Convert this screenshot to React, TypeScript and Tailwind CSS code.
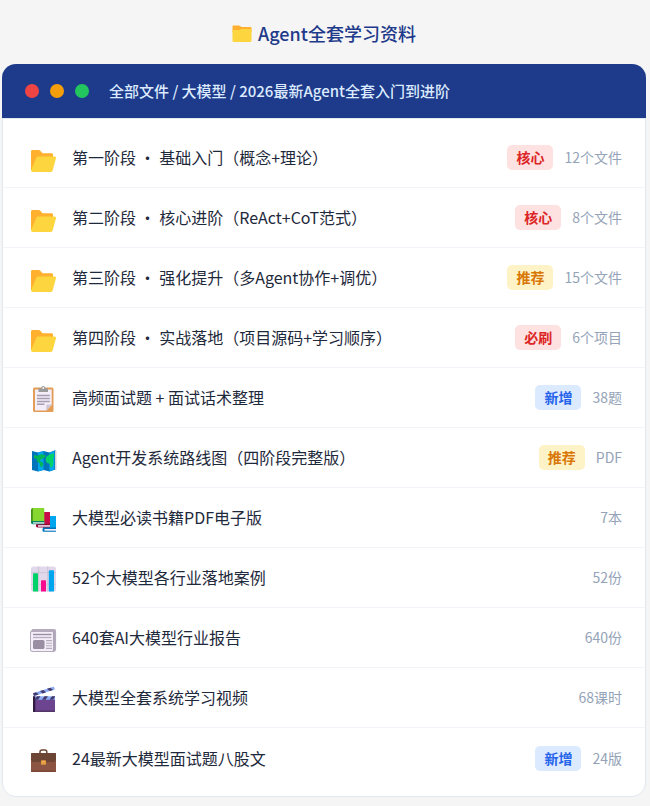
import type { ReactNode } from "react";

type Tone = "red" | "amber" | "blue";

type FileRow = {
  icon: ReactNode;
  name: string;
  tag?: { label: string; tone: Tone };
  count: string;
};

const toneClasses: Record<Tone, string> = {
  red: "bg-[#fee2e2] text-[#dc2626]",
  amber: "bg-[#fef3c7] text-[#d97706]",
  blue: "bg-[#dbeafe] text-[#2563eb]",
};

function Icon({ children }: { children: ReactNode }) {
  return (
    <svg viewBox="0 0 28 28" className="mt-0.5 size-7 shrink-0" aria-hidden="true">
      {children}
    </svg>
  );
}

function ClosedFolder() {
  return (
    <svg viewBox="0 0 20 20" className="size-5 shrink-0" aria-hidden="true">
      <path d="M.5 3.700c0-.7.5-1.200 1.200-1.200h5.300c.4 0 .8.200 1.100.5l1.300 1.100h8.900c.7 0 1.200.5 1.200 1.200V9.500H.5z" fill="#FFB02E" />
      <path d="M.5 8.200C.5 7.500 1 7 1.700 7h5.700c.4 0 .7-.1 1-.4l.6-.4c.3-.2.6-.3 1-.3h8.300c.7 0 1.200.5 1.200 1.200v10.700c0 .7-.5 1.200-1.200 1.200H1.700c-.7 0-1.200-.5-1.200-1.200z" fill="#FCD53F" />
    </svg>
  );
}

function FolderIcon() {
  return (
    <Icon>
      <path d="M2 6.500C2 5.700 2.700 5 3.500 5h6.200c.5 0 1 .2 1.400.6l2.400 2.600h9c.9 0 1.500.7 1.500 1.500V14L6 25.500 2 25z" fill="#FFB02E" />
      <path d="M7.400 12.700c.2-.8.900-1.300 1.700-1.300H25.600c1.100 0 1.700.9 1.400 1.900l-3.300 12c-.2.9-1 1.600-2 1.600H3.800c-1.200 0-2-1-1.700-2.100z" fill="#FCD53F" />
    </Icon>
  );
}

function ClipboardIcon() {
  return (
    <Icon>
      <rect x="4" y="2.500" width="20.500" height="24.500" rx="1.500" fill="#E39D57" />
      <path d="M6 4.500h16.700V20L17.300 25.500H6z" fill="#F3EEF8" />
      <path d="M22.700 19.500 17.300 25.500v-4.600c0-.8.600-1.400 1.400-1.400z" fill="#CDC4D6" />
      <path d="M9.500 4.300c0-.6.500-1 1-1h1.600C12.300 1.900 13.100 1 14.200 1s2 .9 2.200 2.300H18c.6 0 1 .4 1 1v2.700H9.500z" fill="#9B9B9B" />
      <circle cx="14.200" cy="2.900" r=".9" fill="#fff" />
      <path d="M8 10.500h12.800M8 13.500h12.800M8 16.500h12.800M8 19.200h7.500" stroke="#A69DB0" strokeWidth="1.400" />
    </Icon>
  );
}

function MapIcon() {
  return (
    <Icon>
      <path d="m3 6 6 1.500 5.500-1.500 6 1.500L26.500 5v19.500l-6 2-6-1.500L9 26.500 3 25z" fill="#0074BA" />
      <path d="m9 7.500 5.500-1.500v19L9 26.500zM20.500 7.500l5-1.500v18.500l-5 2z" fill="#00A6ED" />
      <path d="m5 10 3.500.8L12.800 9l1.700 1 2.200-.3-.5 2.300-3 2-1.700.4-.5 1.600 2.500 1.300 1 2-1.800 3.300-1.700-1.700-.5-2.800-2.500-1.800-.2-2.200L5 13z" fill="#00B659" />
      <path d="m17 12 3.500-2.500L25 8.300v4.200l-1 1.500.5 3-.7 4.300-2.300 1.500-1-4.200-2.500-.6-1.300-2.700z" fill="#00D26A" />
      <path d="m26 5.200 1.500.8v18.800l-1.500.2z" fill="#D3D3D3" />
    </Icon>
  );
}

function BooksIcon() {
  return (
    <Icon>
      <path d="M14 12.500c0-1 .6-1.500 1.500-1.500H27v14.300H14z" fill="#00A6ED" />
      <path d="M13.500 23.600c.6-.9 1.300-1.200 2.500-1.200h11V25c-.6-.1-.8.500 0 1v.7H15c-1 0-1.700-.8-1.500-1.800z" fill="#0074BA" />
      <path d="M15.500 24H27v1.700H15.500z" fill="#F3EEF8" />
      <path d="M7.500 8.500c0-.9.600-1.500 1.500-1.500h12v14.500H7.500z" fill="#CA0B4A" />
      <path d="M7 20c.5-1 1.200-1.300 2.300-1.300H21v2c-.5.300-.5.700 0 1v.8H8.700C7.500 22.500 6.800 21.500 7 20.500z" fill="#990838" />
      <path d="M9 20.200h12v1.500H9z" fill="#F3EEF8" />
      <path d="M2.200 4.800C2.200 3.700 3 3 4 3h10.500c.5 0 .8.300.8.800V18H2.200z" fill="#86D72F" />
      <path d="M2 5.500C2 4.200 2.700 3.400 3.800 3v14L2 18z" fill="#44911B" />
      <path d="M2 17.600c.3-1 1-1.500 2-1.500h11.300v1.200c-.5.300-.5.700 0 1v1H4c-1.300 0-2-.7-2-1.700z" fill="#008463" />
      <path d="M4 17.300h11.300v1.300H4z" fill="#F3EEF8" />
    </Icon>
  );
}

function ChartIcon() {
  return (
    <Icon>
      <rect x="2" y="1.500" width="25" height="25" rx="2.500" fill="#E1D8EC" />
      <path d="M9.500 1.500v25M18.700 1.500v25M2 7.700h25M2 19.300h25" stroke="#CDC4D6" strokeWidth="1.100" />
      <path d="M4 9.200c0-.6.4-1 1-1h3c.6 0 1 .4 1 1V26.500H5c-.6 0-1-.4-1-1z" fill="#00D26A" />
      <path d="M12 16.200c0-.6.400-1 1-1h3c.6 0 1 .4 1 1v10.300h-5z" fill="#F70A8D" />
      <path d="M19.800 6.200c0-.6.400-1 1-1h3.200c.6 0 1 .4 1 1v19.300c0 .6-.4 1-1 1h-4.200z" fill="#00A6ED" />
    </Icon>
  );
}

function NewsIcon() {
  return (
    <Icon>
      <path d="M3.500 4h21.700c1.100 0 1.900.8 1.900 1.900v18.300c0 1.600-1.100 2.800-2.800 2.800H3.500C2 27 1 26 1 24.500V7z" fill="#B4ACBC" />
      <path d="M2 8.200C2 7.500 2.500 7 3.200 7h19.600c.7 0 1.200.5 1.200 1.200V24c0 1-.2 1.500-.6 2H3.500C2.600 26 2 25.400 2 24.500z" fill="#F3EEF8" />
      <path d="M24.600 7.500v17c0 .7-.4 1.200-.9 1.500.9 0 1.600-.6 1.600-1.500V7z" fill="#998EA4" opacity=".5" />
      <path d="M4 9.500h18.500" stroke="#998EA4" strokeWidth="1.400" />
      <path d="M4 12.500h18.500" stroke="#B4ACBC" strokeWidth="1.300" />
      <rect x="4" y="15" width="11.500" height="9" rx="1.500" fill="#998EA4" />
      <path d="M17 15.600h6M17 18.200h6M17 20.800h6M17 23.400h6" stroke="#B4ACBC" strokeWidth="1.100" />
    </Icon>
  );
}

function ClapperIcon() {
  return (
    <Icon>
      <path d="m4 8.200 20.300-6.400c.5-.1.800.1.900.5l.6 2.300L5 11z" fill="#8CAAF4" />
      <path d="m4 8.200 3-1 2.700 2.400L5 11zM11 6l3.500-1.100 2.500 2.500-3.500 1zM18 3.800l3.400-1.100 2.700 2.400-3.400 1z" fill="#433B6B" />
      <path d="M4 12.500h22V26.300c0 .4-.3.700-.7.700H4.700c-.4 0-.7-.3-.7-.7z" fill="#6D4490" />
      <path d="M4 11.300h22v3.500H4z" fill="#8CAAF4" />
      <path d="m8 11.300-2.500 3.500H9l2.500-3.500zm7.500 0L13 14.800h3.500l2.500-3.500zm7.500 0-2.500 3.500H24l2-2.800v-.7z" fill="#433B6B" />
      <path d="M4 11.300h2.300V27H4.700c-.4 0-.7-.3-.7-.7z" fill="#321B41" />
      <path d="M6.300 25.500H26v.8c0 .4-.3.700-.7.700h-19z" fill="#533566" />
    </Icon>
  );
}

function BriefcaseIcon() {
  return (
    <Icon>
      <path d="M11 8V7c0-1.200 1-2 2-2h2.800c1.200 0 2 .9 2 2v1" fill="none" stroke="#6D4534" strokeWidth="1.500" />
      <rect x="2" y="8" width="25" height="19" rx="1.300" fill="#8C5543" />
      <path d="M2 9.300C2 8.500 2.600 8 3.300 8h22.400c.8 0 1.300.5 1.300 1.300V14c0 1.700-1.200 3-3 3H5c-1.700 0-3-1.200-3-3z" fill="#6D4534" />
      <path d="M2 25.500h25v.4c0 .6-.5 1.100-1.100 1.100H3.100C2.500 27 2 26.500 2 25.900z" fill="#7D4533" />
      <rect x="12" y="15.200" width="5" height="4.500" rx=".6" fill="#E39D3F" />
      <path d="M13 16.200h3v1h-3z" fill="#F3AD61" />
    </Icon>
  );
}

const files: FileRow[] = [
  { icon: <FolderIcon />, name: "第一阶段 · 基础入门（概念+理论）", tag: { label: "核心", tone: "red" }, count: "12个文件" },
  { icon: <FolderIcon />, name: "第二阶段 · 核心进阶（ReAct+CoT范式）", tag: { label: "核心", tone: "red" }, count: "8个文件" },
  { icon: <FolderIcon />, name: "第三阶段 · 强化提升（多Agent协作+调优）", tag: { label: "推荐", tone: "amber" }, count: "15个文件" },
  { icon: <FolderIcon />, name: "第四阶段 · 实战落地（项目源码+学习顺序）", tag: { label: "必刷", tone: "red" }, count: "6个项目" },
  { icon: <ClipboardIcon />, name: "高频面试题 + 面试话术整理", tag: { label: "新增", tone: "blue" }, count: "38题" },
  { icon: <MapIcon />, name: "Agent开发系统路线图（四阶段完整版）", tag: { label: "推荐", tone: "amber" }, count: "PDF" },
  { icon: <BooksIcon />, name: "大模型必读书籍PDF电子版", count: "7本" },
  { icon: <ChartIcon />, name: "52个大模型各行业落地案例", count: "52份" },
  { icon: <NewsIcon />, name: "640套AI大模型行业报告", count: "640份" },
  { icon: <ClapperIcon />, name: "大模型全套系统学习视频", count: "68课时" },
  { icon: <BriefcaseIcon />, name: "24最新大模型面试题八股文", tag: { label: "新增", tone: "blue" }, count: "24版" },
];

export default function App() {
  return (
    <main
      lang="zh-CN"
      className="min-h-screen bg-[#f5f5f5] pt-5 pr-1 pb-2 pl-0.5 font-['Noto_Sans_CJK_SC',sans-serif]"
    >
      <h1 className="mb-[18px] flex h-[26px] items-center justify-center gap-1.5 text-lg font-medium text-[#1e3a8a]">
        <ClosedFolder />
        Agent全套学习资料
      </h1>

      <section>
        <header className="flex h-[54px] items-center rounded-t-[14px] bg-[#1e3a8a] px-[23px]">
          <div className="flex gap-[11px]">
            <span className="size-3.5 rounded-full bg-[#ef4444]" />
            <span className="size-3.5 rounded-full bg-[#f59e0b]" />
            <span className="size-3.5 rounded-full bg-[#22c55e]" />
          </div>
          <p className="ml-5 text-[15px] font-medium text-[#dbeafe]">
            全部文件 / 大模型 / 2026最新Agent全套入门到进阶
          </p>
        </header>

        <ul className="rounded-b-[14px] border border-[#e2e8f0] bg-white pt-[9px] pb-2">
          {files.map((file) => (
            <li
              key={file.name}
              className="flex h-15 items-center border-b border-[#f1f5f9] pr-[23px] pl-[26px] last:border-b-0"
            >
              {file.icon}
              <span className="ml-[15px] flex-1 text-base leading-[25px] text-[#1e293b]">{file.name}</span>
              {file.tag && (
                <span
                  className={`mr-[11px] rounded-[5px] px-[9px] text-sm leading-[25px] font-bold ${toneClasses[file.tag.tone]}`}
                >
                  {file.tag.label}
                </span>
              )}
              <span className="text-sm leading-[25px] text-[#94a3b8]">{file.count}</span>
            </li>
          ))}
        </ul>
      </section>
    </main>
  );
}
